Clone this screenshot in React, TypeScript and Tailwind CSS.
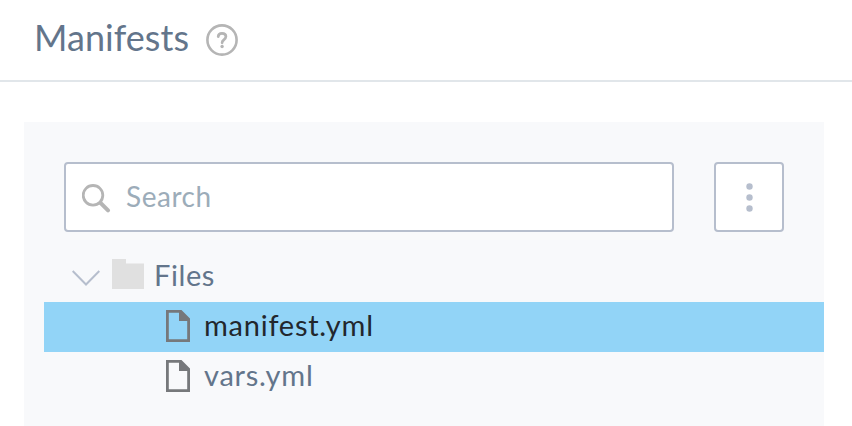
import React from 'react';

function FileIcon() {
  return (
    <svg className="block h-8 w-6 shrink-0" viewBox="0 0 24 32">
      <path fill="#76787b" fillRule="evenodd" d="M0 0H15.5L24 8.5V32H0ZM2.8 2.8V29.2H21.2V11H13V2.8Z" />
    </svg>
  );
}

function FileRow({ name, selected = false }: { name: string; selected?: boolean }) {
  return (
    <div className={`ml-5 flex h-[50px] items-center pl-[122px] ${selected ? 'bg-[#92d4f7] text-[#22272d]' : 'text-[#63758b]'}`}>
      <div className="-mt-0.5">
        <FileIcon />
      </div>
      <span className="ml-[14px] -mt-1 text-[29px] leading-10 tracking-[0.75px]">{name}</span>
    </div>
  );
}

function Dot() {
  return (
    <svg className="block h-[7px] w-[7px]" viewBox="0 0 7 7">
      <circle cx="3.5" cy="3.5" r="3.2" fill="#b6becd" />
    </svg>
  );
}

export default function App() {
  return (
    <div className="h-[426px] w-[852px] overflow-hidden bg-white font-['Lato',sans-serif]">
      <header className="flex h-[82px] items-center border-b-2 border-[#e1e6ea] pl-[34px]">
        <h1 className="-mt-1.5 w-[172px] text-[36px] leading-[48px] tracking-[0.05px] text-[#63758b]">Manifests</h1>
        <svg className="h-8 w-8" viewBox="0 0 32 32" fill="none" stroke="#b5b5b5">
          <circle cx="16" cy="16" r="14.6" strokeWidth="2.6" />
          <path d="M12.2 12.6C12.3 10.5 13.8 9.3 16 9.3C18.3 9.3 19.9 10.6 19.9 12.6C19.9 14.2 18.9 15 17.8 15.8C16.7 16.6 16.1 17.2 16.1 18.8" strokeWidth="2.7" strokeLinecap="round" />
          <circle cx="16.1" cy="22.5" r="1.7" fill="#b5b5b5" stroke="none" />
        </svg>
      </header>
      <main className="mx-auto mt-10 h-[304px] w-[804px] pr-1">
        <section className="h-full w-[800px] bg-[#f8f9fb] pt-10">
          <div className="flex gap-10 px-10">
            <div className="flex h-[70px] w-[610px] items-center rounded border-2 border-[#b6becd] bg-white pl-4">
              <svg className="mt-0.5 h-[29px] w-[29px]" viewBox="0 0 29 29" fill="none" stroke="#b5b5b5">
                <circle cx="11" cy="11.3" r="9.8" strokeWidth="2.8" />
                <path d="M18.5 18.8L26 26.3" strokeWidth="4" strokeLinecap="round" />
              </svg>
              <span className="ml-[15px] -mt-0.5 text-[28px] leading-10 tracking-[0.55px] text-[#9cacb9]">Search</span>
            </div>
            <button className="flex h-[70px] w-[70px] flex-col items-center justify-center gap-1 rounded border-2 border-[#b6becd] bg-white pl-px">
              <Dot />
              <Dot />
              <Dot />
            </button>
          </div>
          <div className="flex h-[70px] items-center pl-12 pt-[18px]">
            <svg className="mt-1 h-4 w-7" viewBox="0 0 28 16" fill="none" stroke="#b6becd" strokeWidth="2">
              <path d="M.7 1L14 14.5L27.3 1" />
            </svg>
            <svg className="ml-3 -mt-1 h-[30px] w-8" viewBox="0 0 32 30" fill="#e0e0e0">
              <path d="M0 0H14V4.5H32V30H0Z" />
            </svg>
            <span className="ml-[10px] -mt-0.5 text-[29px] leading-10 tracking-[0.6px] text-[#63758b]">Files</span>
          </div>
          <FileRow name="manifest.yml" selected />
          <FileRow name="vars.yml" />
        </section>
      </main>
    </div>
  );
}
